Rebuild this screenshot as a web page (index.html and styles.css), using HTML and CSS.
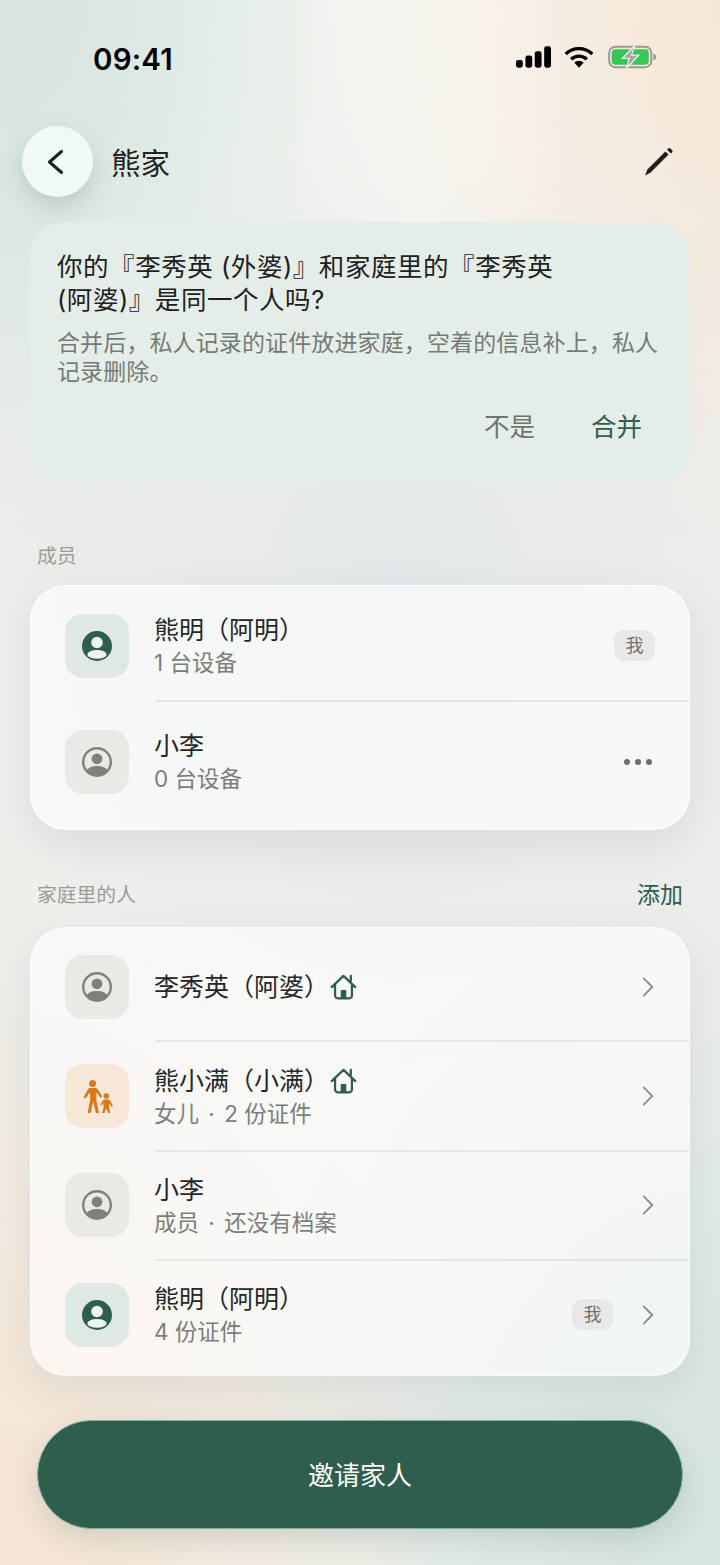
FILE: index.html
```html
<!DOCTYPE html>
<html lang="zh-CN">
<head>
<meta charset="utf-8">
<title>熊家</title>
<link rel="stylesheet" href="styles.css">
</head>
<body>
<main class="screen">
  <header class="status">
    <span class="time">09:41</span>
    <div class="status-icons">
      <svg class="sig" viewBox="0 0 36 22"><rect x="0" y="14" width="7" height="8" rx="2.4"/><rect x="9.7" y="9.5" width="7" height="12.5" rx="2.4"/><rect x="19.3" y="5" width="7" height="17" rx="2.4"/><rect x="29" y="0" width="7" height="22" rx="2.4"/></svg>
      <svg class="wifi" viewBox="0 0 30 22"><path d="M15 21.8 10.3 16.6a7 7 0 0 1 9.4 0Z"/><path d="M15 8.4a13 13 0 0 1 9 3.6l-2.3 2.5a9.8 9.8 0 0 0-13.4 0L6 12a13 13 0 0 1 9-3.6Z"/><path d="M15 1a20.6 20.6 0 0 1 14.4 5.8l-2.3 2.5a17.2 17.2 0 0 0-24.2 0L.6 6.8A20.6 20.6 0 0 1 15 1Z"/></svg>
      <svg class="batt" viewBox="0 0 50 24"><rect x="1.2" y="1.6" width="43" height="20.8" rx="6.4" fill="none" stroke="#9a9a94" stroke-width="2"/><rect x="3.8" y="4.2" width="37.8" height="15.6" rx="4" fill="#35c759"/><path d="M46.2 8.6c2 .5 3 1.800 3 3.400s-1 2.900-3 3.400Z" fill="#9a9a94"/><path d="M27.500 0 14.500 13.500h7.200L18.500 24l13-14h-7.400Z" fill="#a9a9a2" stroke="#f0ece4" stroke-width="1.300"/></svg>
    </div>
  </header>

  <nav class="nav">
    <button class="back" aria-label="返回"><svg viewBox="0 0 24 24"><path d="M15.500 1.500 3.500 12l12 10.500"/></svg></button>
    <h1 class="title">熊家</h1>
    <svg class="pen" viewBox="0 0 30 30"><path d="M1 28.500 3.400 22.400 21.400 4.400 24.600 7.600 6.600 25.600Z"/><path d="M23 2.800 24.200 1.600a1.600 1.600 0 0 1 2.300 0l1.500 1.500a1.600 1.600 0 0 1 0 2.300L26.800 6.600Z"/></svg>
  </nav>

  <section class="notice">
    <h2 class="notice-title">你的『李秀英 (外婆)』和家庭里的『李秀英<br>(阿婆)』是同一个人吗?</h2>
    <p class="notice-body">合并后，私人记录的证件放进家庭，空着的信息补上，私人记录删除。</p>
    <div class="notice-actions">
      <button class="act act-no">不是</button>
      <button class="act act-yes">合并</button>
    </div>
  </section>

  <div class="label-row first"><span class="label">成员</span></div>
  <section class="card members">
    <div class="row member-a">
      <span class="ava ava-green"><svg viewBox="0 0 32 32"><use href="#person"/></svg></span>
      <div class="text"><div class="name">熊明（阿明）</div><div class="sub">1 台设备</div></div>
      <span class="tag">我</span>
    </div>
    <div class="row member-b">
      <span class="ava ava-gray"><svg viewBox="0 0 32 32"><use href="#person-o"/></svg></span>
      <div class="text"><div class="name">小李</div><div class="sub">0 台设备</div></div>
      <span class="dots"><i></i><i></i><i></i></span>
    </div>
  </section>

  <div class="label-row second"><span class="label">家庭里的人</span><span class="add">添加</span></div>
  <section class="card people">
    <div class="row">
      <span class="ava ava-gray"><svg viewBox="0 0 32 32"><use href="#person-o"/></svg></span>
      <div class="text"><div class="name">李秀英（阿婆）<svg class="home" viewBox="1 1 24 24"><use href="#home"/></svg></div></div>
      <svg class="chev" viewBox="0 0 14 24"><path d="M2 2 12 12 2 22"/></svg>
    </div>
    <div class="row">
      <span class="ava ava-orange"><svg viewBox="0 0 32 32"><use href="#family"/></svg></span>
      <div class="text"><div class="name">熊小满（小满）<svg class="home" viewBox="1 1 24 24"><use href="#home"/></svg></div><div class="sub">女儿<span class="sep"> · </span>2 份证件</div></div>
      <svg class="chev" viewBox="0 0 14 24"><path d="M2 2 12 12 2 22"/></svg>
    </div>
    <div class="row">
      <span class="ava ava-gray"><svg viewBox="0 0 32 32"><use href="#person-o"/></svg></span>
      <div class="text"><div class="name">小李</div><div class="sub">成员<span class="sep"> · </span>还没有档案</div></div>
      <svg class="chev" viewBox="0 0 14 24"><path d="M2 2 12 12 2 22"/></svg>
    </div>
    <div class="row">
      <span class="ava ava-green"><svg viewBox="0 0 32 32"><use href="#person"/></svg></span>
      <div class="text"><div class="name">熊明（阿明）</div><div class="sub">4 份证件</div></div>
      <span class="tag tag-mid">我</span>
      <svg class="chev" viewBox="0 0 14 24"><path d="M2 2 12 12 2 22"/></svg>
    </div>
  </section>

  <button class="invite">邀请家人</button>

  <svg class="defs" width="0" height="0" aria-hidden="true">
    <defs>
      <g id="person">
        <circle cx="16" cy="16" r="15" fill="#2f5d4e"/>
        <circle cx="16" cy="12.500" r="5.800" fill="#eef3f0"/>
        <ellipse cx="16" cy="24.400" rx="9.600" ry="4.300" fill="#eef3f0"/>
      </g>
      <g id="person-o">
        <circle cx="16" cy="16" r="13.800" fill="none" stroke="#807f7a" stroke-width="2.400"/>
        <circle cx="16" cy="12.800" r="5.400" fill="#807f7a"/>
        <path d="M5 25C7.500 21 11.300 20 16 20S24.500 21 27 25C24 28 20 29.500 16 29.500S8 28 5 25Z" fill="#807f7a"/>
      </g>
      <g id="home">
        <path d="M2.500 13.500 13 3.500 23.500 13.500M5.500 11.500V21a2.500 2.500 0 0 0 2.500 2.500H18a2.500 2.500 0 0 0 2.500-2.500V11.500M19.500 3.500v4.500" fill="none" stroke="#2f5d4e" stroke-width="2" stroke-linecap="round" stroke-linejoin="round"/>
        <rect x="10.500" y="16" width="5" height="7.500" rx="1" fill="#2f5d4e"/>
      </g>
      <g id="family" fill="#d9791a">
        <circle cx="11.500" cy="4" r="3.200"/>
        <path d="M9 8.300h5c1 0 1.800.5 2.300 1.300l4.300 6.500-1.700 1.200-3.900-5.100V19.500l2.300 11.500h-2.700L12 20.800 9.700 31H7L9.200 19.500V12.200L5 17.800 3.300 16.500l4-7A2 2 0 0 1 9 8.300Z"/>
        <circle cx="24" cy="15.500" r="2.500"/>
        <path d="M22.300 18.700h3.400c.7 0 1.300.4 1.600 1l2.900 4.900-1.400.8-2.200-3.200V26l1.100 5h-2L24 26.500 22.300 31h-2L21.500 26v-4.300l-1.700 2.500-1.200-.9 2.300-3.600c.4-.6.900-1 1.400-1Z"/>
      </g>
    </defs>
  </svg>
</main>
</body>
</html>
```
FILE: styles.css
```css
* { box-sizing: border-box; }
html, body { margin: 0; padding: 0; }
body { font-family: "Inter", "Noto Sans CJK SC", sans-serif; color: #1f2321; }
.screen {
  width: 720px; height: 1565px; overflow: hidden; position: relative;
  display: flex; flex-direction: column;
  padding: 0 30px;
  background:
    radial-gradient(ellipse 400px 560px at 105% 0%, rgba(245,230,214,1) 0%, rgba(245,230,214,.7) 40%, rgba(245,230,214,.25) 72%, rgba(245,230,214,0) 100%),
    radial-gradient(ellipse 440px 660px at 0% 100%, rgba(246,229,212,1) 0%, rgba(246,229,212,.7) 35%, rgba(246,229,212,.25) 70%, rgba(246,229,212,0) 100%),
    radial-gradient(ellipse 460px 600px at 0% 0%, rgba(214,229,222,1) 0%, rgba(214,229,222,.7) 38%, rgba(214,229,222,.25) 72%, rgba(214,229,222,0) 100%),
    radial-gradient(ellipse 500px 700px at 100% 100%, rgba(212,229,221,1) 0%, rgba(212,229,221,.7) 35%, rgba(212,229,221,.25) 70%, rgba(212,229,221,0) 100%),
    radial-gradient(ellipse 520px 380px at 55% 0%, rgba(250,249,245,1) 0%, rgba(250,249,245,.7) 45%, rgba(250,249,245,0) 100%),
    radial-gradient(ellipse 380px 170px at 50% 100%, rgba(241,241,237,.9), rgba(241,241,237,0) 100%),
    radial-gradient(ellipse 420px 480px at 55% 38%, #e4e8ea, #eeeeeb 100%);
  background-color: #eeeeeb;
}
.status { height: 126px; margin: 0 -30px; padding: 42px 63px 0 93px; display: flex; justify-content: space-between; align-items: flex-start; }
.time { font-size: 29.500px; line-height: 34px; font-weight: 600; color: #000; letter-spacing: .2px; }
.status-icons { display: flex; align-items: center; gap: 13px; margin-top: 3px; }
.sig { width: 35px; height: 22px; fill: #000; }
.wifi { width: 30px; height: 22px; fill: #000; }
.batt { width: 49px; height: 24px; margin-left: 1px; }

.nav { height: 71px; margin: 0 -8px; display: flex; align-items: center; }
.back { width: 71px; height: 71px; border-radius: 50%; border: 0; padding: 0; background: #f1f9f5; box-shadow: 0 10px 24px rgba(70,100,88,.22); display: flex; align-items: center; justify-content: center; }
.back svg { width: 24px; height: 24px; fill: none; stroke: #1c201e; stroke-width: 3; stroke-linecap: round; stroke-linejoin: round; }
.title { margin: 3px 0 0 18px; flex: 1; font-size: 29.500px; font-weight: 400; line-height: 36px; }
.pen { width: 30px; height: 30px; margin: 1px 24px 0 0; fill: #1c201e; }

.notice { height: 260px; margin-top: 25px; padding: 28px 27px 0; border-radius: 36px; background: #e5ede8; display: flex; flex-direction: column; }
.notice-title { margin: 0; font-size: 25.500px; font-weight: 400; line-height: 33px; color: #1d211f; letter-spacing: .55px; }
.notice-body { margin: 13px 0 0; font-size: 23px; line-height: 29px; color: #767a77; letter-spacing: .12px; }
.notice-actions { display: flex; justify-content: flex-end; gap: 56px; margin-top: 20px; padding-right: 21px; }
.act { border: 0; background: none; padding: 0; font: inherit; font-size: 25.500px; line-height: 40px; }
.act-no { color: #6f7370; }
.act-yes { color: #2f5d4e; }

.label-row { display: flex; justify-content: space-between; align-items: center; padding: 0 7px; height: 30px; }
.label-row.first { margin-top: 57px; }
.label-row.second { margin-top: 48px; }
.label { font-size: 19.800px; color: #9a9c98; }
.add { font-size: 23px; color: #2f5d4e; }

.card { border-radius: 36px; background: rgba(255,255,255,.6); border: 1.500px solid rgba(255,255,255,.75); box-shadow: 0 14px 40px rgba(110,120,125,.14); }
.members { margin-top: 16px; height: 245px; padding-top: 5.500px; }
.people { margin-top: 19px; height: 449px; padding-top: 4px; }

.row { height: 109.400px; display: flex; align-items: center; padding-left: 34px; padding-right: 35px; position: relative; }
.row + .row::before { content: ""; position: absolute; left: 124px; right: 0; top: -1px; border-top: 2px solid rgba(190,195,190,.32); }
.members .row { padding-right: 34px; }
.members .member-a { height: 108px; }
.members .member-b { height: 108px; margin-top: 8px; }
.members .member-b::before { top: -8px; }
.ava { flex: none; width: 64px; height: 64px; border-radius: 18px; display: flex; align-items: center; justify-content: center; }
.ava svg { width: 32px; height: 32px; }
.ava-green { background: #dfe8e3; }
.ava-gray { background: #e9e9e6; }
.ava-orange { background: #f6e7d8; }
.ava-orange svg { width: 35px; height: 35px; }
.text { flex: 1; margin-left: 25px; min-width: 0; }
.text:has(.sub) { padding-top: 3px; }
.name { font-size: 25px; line-height: 32px; color: #23272a; display: flex; align-items: center; white-space: nowrap; }
.sub { font-size: 22.500px; line-height: 34px; color: #7b7e7b; }
.sep { margin: 0 3px; }
.home { width: 27px; height: 27px; margin-left: 1px; }
.tag { flex: none; width: 41px; height: 31px; border-radius: 11px; background: #e8e9e6; color: #6f716e; font-size: 18px; line-height: 31px; text-align: center; }
.tag-mid { margin-right: 29px; }
.dots { display: flex; gap: 5px; margin-right: 3px; }
.dots i { width: 6px; height: 6px; border-radius: 50%; background: #6c6e6c; }
.chev { flex: none; width: 12px; height: 22px; fill: none; stroke: #8e908d; stroke-width: 2.200; stroke-linecap: round; stroke-linejoin: round; }
.invite { margin: 44px 7px 0; height: 109px; padding-bottom: 4px; border-radius: 55px; border: 1px solid #7fb09e; background: #2f5d4e; color: #fff; font: inherit; font-size: 26px; box-shadow: 0 10px 30px rgba(60,85,75,.18); }
.defs { position: absolute; }
```
